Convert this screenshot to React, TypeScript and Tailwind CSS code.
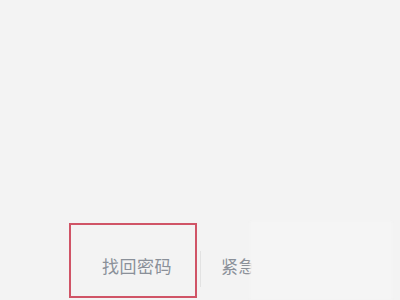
export default function App() {
    return (
        <div className="relative h-[300px] w-[400px] overflow-hidden bg-[#f3f3f3] font-['Noto_Sans_CJK_SC',sans-serif]">
            <div className="flex items-start pl-[69px] pt-[223px]">
                {/* highlighted link */}
                <div className="h-[75px] w-[128px] border-2 border-[#d05466] pl-[31px] pt-[31px]">
                    <span className="block text-[17px] leading-[20px] tracking-[0.5px] text-[#8a9099]">找回密码</span>
                </div>
                <div className="ml-[3px] mt-[28px] h-[36px] w-px bg-[#e2e2e2]" />
                <span className="ml-[20px] mt-[33px] text-[17px] leading-[20px] tracking-[0.5px] text-[#8a9099]">紧急冻结</span>
            </div>

            {/* faded cover over the right side */}
            <div className="absolute left-[250px] top-[221px] h-[79px] w-[142px] bg-[#f5f5f5] blur-[1px]" />
        </div>
    );
}
